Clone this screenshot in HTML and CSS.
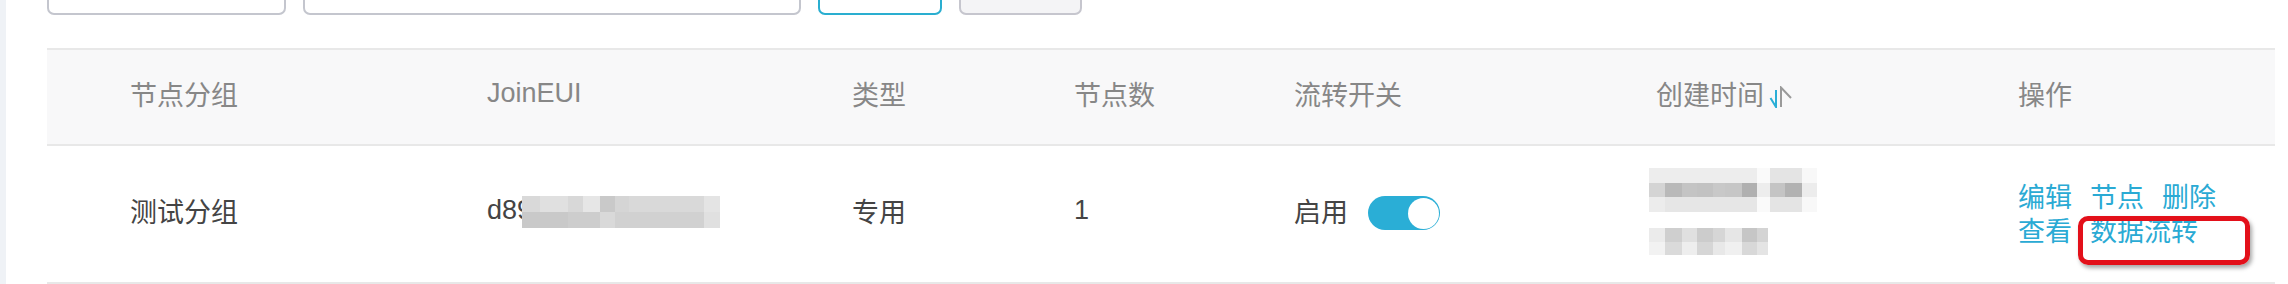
FILE: index.html
```html
<!DOCTYPE html>
<html lang="zh-CN">
<head>
<meta charset="utf-8">
<title>节点分组</title>
<link rel="stylesheet" href="styles.css">
</head>
<body>
<div class="page">
  <div class="side"></div>
  <div class="main">
    <div class="toolbar">
      <div class="field field-sm"></div>
      <div class="field field-lg"></div>
      <div class="btn btn-primary"></div>
      <div class="btn btn-plain"></div>
    </div>

    <div class="table">
      <div class="row head">
        <div class="cell">节点分组</div>
        <div class="cell">JoinEUI</div>
        <div class="cell">类型</div>
        <div class="cell">节点数</div>
        <div class="cell">流转开关</div>
        <div class="cell">创建时间
          <svg class="sort" width="24" height="22" viewBox="0 0 24 22">
            <polyline points="1.5,12 7,21 7,4" fill="none" stroke="#2aaed6" stroke-width="2"/>
            <polyline points="12,21 12,1.5 22,12" fill="none" stroke="#9a9a9a" stroke-width="2"/>
          </svg>
        </div>
        <div class="cell">操作</div>
      </div>

      <div class="row body">
        <div class="cell">测试分组</div>
        <div class="cell"><span>d89</span>
          <svg class="mosaic eui" width="198" height="32" viewBox="0 0 198 32">
            <rect x="0" y="0" width="18" height="16" fill="#d9d9d9"/>
            <rect x="18" y="0" width="28" height="16" fill="#e0e0e0"/>
            <rect x="46" y="0" width="15" height="16" fill="#d8d8d8"/>
            <rect x="61" y="0" width="17" height="16" fill="#e6e6e6"/>
            <rect x="78" y="0" width="15" height="16" fill="#c9c9c9"/>
            <rect x="93" y="0" width="14" height="16" fill="#d5d5d5"/>
            <rect x="107" y="0" width="75" height="16" fill="#d9d9d9"/>
            <rect x="182" y="0" width="16" height="16" fill="#e4e4e4"/>
            <rect x="0" y="16" width="46" height="16" fill="#c9c9c9"/>
            <rect x="46" y="16" width="32" height="16" fill="#cdcdcd"/>
            <rect x="78" y="16" width="15" height="16" fill="#d9d9d9"/>
            <rect x="93" y="16" width="89" height="16" fill="#d1d1d1"/>
            <rect x="182" y="16" width="16" height="16" fill="#e0e0e0"/>
          </svg>
        </div>
        <div class="cell">专用</div>
        <div class="cell">1</div>
        <div class="cell">启用
          <span class="switch"><span class="knob"></span></span>
        </div>
        <div class="cell time">
          <svg class="mosaic" width="168" height="44" viewBox="0 0 168 44">
            <rect x="0" y="0" width="121" height="15" fill="#ededed"/>
            <rect x="108" y="0" width="13" height="44" fill="#fafafa"/>
            <rect x="121" y="0" width="32" height="15" fill="#e4e4e4"/>
            <rect x="153" y="0" width="15" height="44" fill="#f8f8f8"/>
            <rect x="0" y="15" width="16" height="14" fill="#d4d4d4"/>
            <rect x="16" y="15" width="17" height="14" fill="#b9b9b9"/>
            <rect x="33" y="15" width="15" height="14" fill="#c4c4c4"/>
            <rect x="48" y="15" width="16" height="14" fill="#c2c2c2"/>
            <rect x="64" y="15" width="12" height="14" fill="#c8c8c8"/>
            <rect x="76" y="15" width="17" height="14" fill="#c6c6c6"/>
            <rect x="93" y="15" width="15" height="14" fill="#b0b0b0"/>
            <rect x="108" y="15" width="13" height="14" fill="#ededed"/>
            <rect x="121" y="15" width="15" height="14" fill="#c4c4c4"/>
            <rect x="136" y="15" width="17" height="14" fill="#b2b2b2"/>
            <rect x="153" y="15" width="15" height="14" fill="#ececec"/>
            <rect x="0" y="29" width="16" height="15" fill="#ececec"/>
            <rect x="16" y="29" width="92" height="15" fill="#e6e6e6"/>
            <rect x="121" y="29" width="32" height="15" fill="#e4e4e4"/>
          </svg>
          <svg class="mosaic" width="119" height="27" viewBox="0 0 119 27">
            <rect x="0" y="0" width="16" height="14" fill="#ebebeb"/>
            <rect x="16" y="0" width="17" height="14" fill="#cfcfcf"/>
            <rect x="33" y="0" width="15" height="14" fill="#e0e0e0"/>
            <rect x="48" y="0" width="16" height="14" fill="#cccccc"/>
            <rect x="64" y="0" width="12" height="14" fill="#d6d6d6"/>
            <rect x="76" y="0" width="17" height="14" fill="#e6e6e6"/>
            <rect x="93" y="0" width="15" height="14" fill="#c6c6c6"/>
            <rect x="108" y="0" width="11" height="14" fill="#d4d4d4"/>
            <rect x="0" y="14" width="16" height="13" fill="#f2f2f2"/>
            <rect x="16" y="14" width="17" height="13" fill="#dadada"/>
            <rect x="33" y="14" width="15" height="13" fill="#eeeeee"/>
            <rect x="48" y="14" width="16" height="13" fill="#d6d6d6"/>
            <rect x="64" y="14" width="12" height="13" fill="#e8e8e8"/>
            <rect x="76" y="14" width="17" height="13" fill="#f0f0f0"/>
            <rect x="93" y="14" width="15" height="13" fill="#d8d8d8"/>
            <rect x="108" y="14" width="11" height="13" fill="#e4e4e4"/>
          </svg>
        </div>
        <div class="cell ops">
          <div class="links">
            <a class="link">编辑</a><a class="link">节点</a><a class="link">删除</a><a class="link">查看</a><a class="link">数据流转</a>
          </div>
          <div class="mark"></div>
        </div>
      </div>
    </div>
  </div>
</div>
</body>
</html>
```

FILE: styles.css
```css
* {
  box-sizing: border-box;
}

html, body {
  margin: 0;
  padding: 0;
  background: #ffffff;
  overflow: hidden;
}

body {
  font-family: "Liberation Sans", "Noto Sans CJK SC", sans-serif;
  font-size: 27px;
}

.page {
  display: flex;
  width: 2288px;
  height: 284px;
}

.side {
  width: 6px;
  flex: none;
  background: #eff2f6;
}

.main {
  padding-left: 41px;
  width: 2282px;
}

.toolbar {
  display: flex;
  gap: 17px;
  height: 64px;
  margin-top: -49px;
}

.field,
.btn {
  height: 64px;
  border: 2px solid #c4c6ce;
  border-radius: 7px;
  background: #ffffff;
}

.field-sm {
  width: 239px;
}

.field-lg {
  width: 498px;
}

.btn-primary {
  width: 124px;
  border-color: #2aaed0;
}

.btn-plain {
  width: 123px;
  background: #f4f4f6;
  border-color: #c6c6ce;
}

.table {
  width: 2228px;
  margin-top: 33px;
}

.row {
  display: grid;
  grid-template-columns: 357px 365px 222px 220px 362px 362px 340px;
}

.head {
  height: 98px;
  background: #f8f8f9;
  border-top: 2px solid #e8e8e8;
  border-bottom: 2px solid #e8e8e8;
  color: #878787;
}

.body {
  height: 138px;
  border-bottom: 2px solid #e8e8e8;
  color: #444444;
}

.cell {
  display: flex;
  align-items: center;
  padding-left: 83px;
  padding-bottom: 8px;
  white-space: nowrap;
}

.sort {
  margin-left: 5px;
  margin-top: 8px;
  flex: none;
}

.mosaic {
  display: block;
  flex: none;
}

.eui {
  margin-left: -10px;
  margin-top: 4px;
}

.time {
  flex-direction: column;
  align-items: flex-start;
  justify-content: center;
  gap: 16px;
  padding-left: 76px;
  padding-bottom: 6px;
}

.switch {
  position: relative;
  display: inline-block;
  width: 72px;
  height: 34px;
  margin-left: 20px;
  margin-top: 6px;
  border-radius: 17px;
  background: #2aaed6;
  flex: none;
}

.knob {
  position: absolute;
  top: 1.5px;
  right: 1.5px;
  width: 31px;
  height: 31px;
  border-radius: 50%;
  background: #ffffff;
}

.ops {
  position: relative;
  white-space: normal;
  padding-right: 40px;
  padding-bottom: 0;
}

.links {
  line-height: 34px;
  margin-top: 2px;
}

.link {
  display: inline-block;
  color: #2aaad4;
  margin-right: 18px;
  cursor: pointer;
}

.mark {
  position: absolute;
  left: 143px;
  top: 70px;
  width: 172px;
  height: 49px;
  border: 5px solid #e3101a;
  border-radius: 10px;
  box-shadow: 2px 3px 4px rgba(0, 0, 0, 0.35);
}
```
